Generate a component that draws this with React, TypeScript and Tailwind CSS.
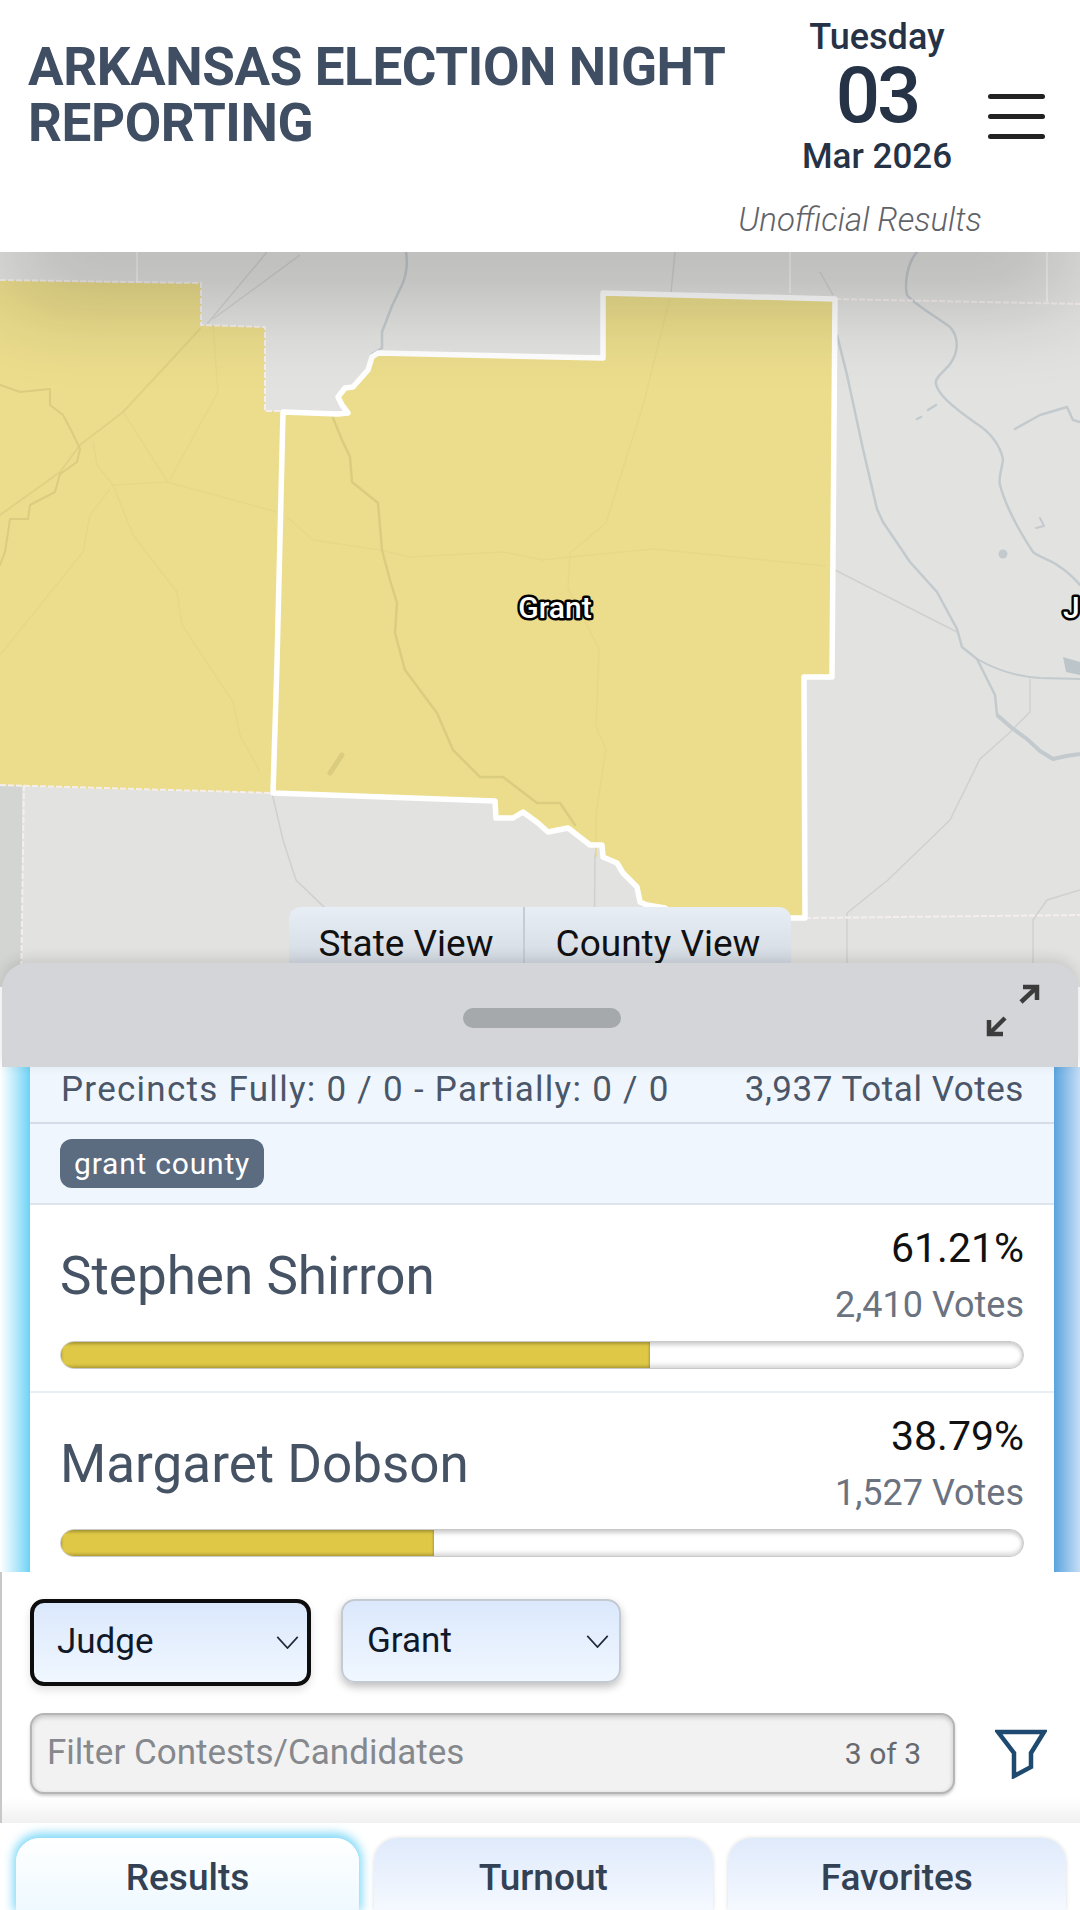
import React from 'react';

const candidates = [
  { name: 'Stephen Shirron', percent: 61.21, votes: '2,410' },
  { name: 'Margaret Dobson', percent: 38.79, votes: '1,527' },
];

const tabs = ['Results', 'Turnout', 'Favorites'];

const grantOutline =
  'M603 293 L835 299 L832 677 L804 677 L805 918 L680 918 L665 908 L647 905 L640 902 L637 887 L623 873 L617 863 L603 857 L602 845 L590 845 L568 828 L548 832 L538 823 L523 812 L513 818 L496 818 L495 801 L273 793 L277 663 L283 412 L338 414 L348 413 L342 405 L338 397 L345 388 L353 387 L368 370 L372 357 L378 353 L603 358 Z';

const CountyMap = () => (
  <svg viewBox="0 252 1080 735" className="block w-full h-full">
    <rect x="0" y="252" width="1080" height="735" fill="#e2e2e0" />
    <rect x="0" y="785" width="22" height="202" fill="#d3d5d3" />

    {/* yellow counties */}
    <path d="M0 280 L137 283 L201 283 L201 325 L265 327 L265 411 L283 411 L273 793 L100 789 L0 785 Z" fill="#ebdd8c" />
    <path d={grantOutline} fill="#ebdd8c" />

    {/* roads outside the yellow */}
    <g fill="none" stroke="#cfd1d1" strokeWidth="1.5">
      <path d="M267 252 L207 324" />
      <path d="M300 255 L213 319" />
      <path d="M675 252 L671 293" />
      <path d="M820 272 L833 295" />
      <path d="M835 570 L957 632" />
      <path d="M1030 679 L1030 712 L1007 735 L980 759 L950 820 L888 880 L847 913 L847 987" />
      <path d="M1080 890 L1047 900 L1033 920 L1033 987" />
      <path d="M272 793 L283 840 L296 880 L324 907 L340 987" />
      <path d="M595 853 L594 987" />
    </g>

    {/* roads inside the yellow */}
    <g fill="none" stroke="#e6d888" strokeWidth="1.5" strokeLinejoin="round">
      <path d="M123 412 L168 482" />
      <path d="M213 325 L218 392 L170 479" />
      <path d="M113 485 L167 482 L277 512" />
      <path d="M113 485 L133 535 L177 592 L182 625 L233 702 L240 735 L260 772" />
      <path d="M110 489 L90 515 L83 552 L0 655" />
      <path d="M93 442 L97 465 L113 485" />
      <path d="M287 517 L313 540 L380 550 L410 557 L503 552 L543 560 L570 557 L654 549 L826 566" />
      <path d="M671 293 L644 402 L606 523 L570 553 L568 588 L599 649 L596 727 L606 749 L596 814 L596 857" />
    </g>

    {/* rivers */}
    <g fill="none" stroke="#c3cace" strokeWidth="2.5" strokeLinejoin="round" strokeLinecap="round">
      <path d="M406 252 C408 265 406 276 402 285 L392 306 L382 332 L382 348 L372 354" />
      <path d="M917 252 C908 262 904 282 907 295 C915 305 938 318 950 327 C958 336 960 350 950 364 C944 372 934 378 936 384 C938 394 950 405 977 424 C990 432 1000 445 1003 459 C1002 470 998 478 1000 485 C1004 500 1012 520 1033 552 C1040 558 1052 560 1060 567 C1068 572 1074 578 1080 585" />
      <path d="M837 335 L847 375 L863 449 L877 509 L883 522 L910 562 L937 592 L957 629 L962 647 L977 659 L995 695 L997 715" />
      <path d="M1015 429 L1040 415 L1067 407 L1073 420 L1080 422" />
      <path d="M977 659 C1000 672 1020 677 1040 678 L1080 679" strokeWidth="2" />
      <path d="M1040 518 L1044 526 L1036 528" strokeWidth="2" />
      <path d="M917 419 L921 417 M928 410 L936 405" strokeWidth="2.5" />
    </g>
    <path d="M997 715 L1012 728 L1027 739 L1040 751 L1053 759 L1066 756 L1080 754" fill="none" stroke="#c3cace" strokeWidth="4" strokeLinejoin="round" />
    <path d="M1063 657 L1080 662 L1080 675 L1066 672 Z" fill="#bcc5ca" />
    <circle cx="1003" cy="554" r="4.5" fill="#c3cace" />

    <g fill="none" stroke="#dacd7f" strokeWidth="2" strokeLinejoin="round" strokeLinecap="round">
      <path d="M200 329 L123 412 L80 445 L60 472 L0 515" stroke="#e0d283" />
      <path d="M333 418 L342 440 L350 457 L352 482 L378 503 L382 550 L390 580 L397 603 L395 633 L405 670 L437 713 L453 750 L480 777 L503 777 L537 803 L560 803 L575 825" strokeWidth="2.5" />
      <path d="M0 385 L20 392 L50 389 L50 405 L63 415 L72 432 L80 449 L77 462 L60 474 L55 492 L30 505 L28 519 L10 519 L5 552 L0 565" />
      <path d="M342 755 L330 773" strokeWidth="5" />
    </g>

    {/* county lines */}
    <g fill="none" stroke="#f4eeee" strokeWidth="2" strokeDasharray="6 2">
      <path d="M835 299 L1080 304" />
      <path d="M805 918 L1080 915" />
      <path d="M24 785 L21 987" />
      <path d="M0 785 L273 793" />
      <path d="M0 280 L201 283 L201 325 L265 327 L265 411 L283 411" />
    </g>
    <g fill="none" stroke="#f4f4f2" strokeWidth="1.5">
      <path d="M137 252 L137 283" />
      <path d="M790 252 L790 293" />
      <path d="M1047 252 L1047 302" />
    </g>

    <path d={grantOutline} fill="none" stroke="#ffffff" strokeWidth="5.5" strokeLinejoin="round" />

    <text x="555" y="618" textAnchor="middle" fontFamily="Roboto, sans-serif" fontSize="30" fontWeight="500" fill="#ffffff" stroke="#000000" strokeWidth="5" strokeLinejoin="round" paintOrder="stroke">Grant</text>
    <text x="1063" y="618" fontFamily="Roboto, sans-serif" fontSize="30" fontWeight="500" fill="#ffffff" stroke="#000000" strokeWidth="5" strokeLinejoin="round" paintOrder="stroke">J</text>
  </svg>
);

const Chevron = () => (
  <svg viewBox="0 0 24 14" className="w-[23px] h-[13px]" fill="none" stroke="#1f2937" strokeWidth="1.8">
    <path d="M1 1 L12 13 L23 1" />
  </svg>
);

export default function App() {
  return (
    <div className="flex flex-col w-full h-[1910px] overflow-hidden bg-white font-['Roboto',sans-serif]">
      {/* header */}
      <header className="flex h-[252px] shrink-0 bg-white">
        <h1 className="w-[767px] pl-[28px] pt-[39px] text-[53px] leading-[56px] font-bold text-[#3f4e63] tracking-[-0.4px]">
          ARKANSAS ELECTION NIGHT REPORTING
        </h1>
        <div className="flex flex-col items-center w-[220px] pt-[16px]">
          <div className="text-[36px] leading-[42px] font-medium text-[#263246]">Tuesday</div>
          <div className="text-[78px] leading-[76px] font-medium text-[#263246] tracking-[-3px]">03</div>
          <div className="text-[35px] leading-[46px] font-medium text-[#263246]">Mar 2026</div>
          <div className="mt-[20px] -ml-[34px] text-[33px] leading-[40px] italic font-light text-[#5f6368] whitespace-nowrap">Unofficial Results</div>
        </div>
        <div className="flex flex-col gap-[15px] w-[57px] ml-[1px] mt-[94px]">
          <div className="h-[5px] rounded-full bg-[#222222]"></div>
          <div className="h-[5px] rounded-full bg-[#222222]"></div>
          <div className="h-[5px] rounded-full bg-[#222222]"></div>
        </div>
      </header>

      {/* map */}
      <div className="relative h-[735px] shrink-0 overflow-hidden">
        <CountyMap />
        <div className="absolute top-0 left-[30px] right-[30px] h-0 shadow-[0_0_100px_30px_rgba(0,0,0,0.33)]"></div>
        <div className="absolute left-[289px] bottom-[24px] flex h-[56px] w-[502px] rounded-t-[12px] bg-gradient-to-b from-[#e8eef6] to-[#d5dbe3] text-[37px] text-[#111111]">
          <div className="flex items-start justify-center w-[236px] pt-[19px] leading-[36px] border-r-2 border-[#c6ccd4]">State View</div>
          <div className="flex items-start justify-center flex-1 pt-[19px] leading-[36px]">County View</div>
        </div>
      </div>

      {/* results sheet */}
      <div className="relative -mt-[24px] flex flex-col h-[609px] shrink-0 rounded-t-[26px]">
        <div className="relative flex items-center justify-center h-[104px] shrink-0 mx-[2px] rounded-t-[26px] bg-[#d3d5d9] shadow-[0_-4px_14px_rgba(0,0,0,0.12)]">
          <div className="w-[158px] h-[20px] mt-[6px] ml-[4px] rounded-full bg-[#a6a9ab]"></div>
          <svg viewBox="0 0 65 65" className="absolute right-[33px] top-[17px] w-[65px] h-[65px]" fill="none" stroke="#3c3c3c" strokeWidth="4.5">
            <path d="M43 7 L57 7 L57 20" />
            <path d="M56 8 L41 22" />
            <path d="M9 40 L9 54 L23 54" />
            <path d="M10 53 L25 38" />
          </svg>
        </div>

        <div className="flex h-[505px] overflow-hidden bg-white">
          <div className="w-[30px] shrink-0 bg-gradient-to-r from-white to-[#6ad3f6]"></div>
          <div className="flex-1 flex flex-col min-w-0">
            <div className="flex items-center justify-between h-[57px] shrink-0 pb-[8px] pl-[31px] pr-[30px] bg-[#eff6fe] border-b-2 border-[#d5dee8] text-[35px] text-[#4b5768]">
              <span className="tracking-[1.27px]">Precincts Fully: 0 / 0 - Partially: 0 / 0</span>
              <span className="tracking-[0.55px]">3,937 Total Votes</span>
            </div>
            <div className="flex items-center h-[81px] shrink-0 pl-[30px] bg-[#eff6fe] border-b-2 border-[#dde4ec]">
              <span className="flex items-center h-[49px] px-[14px] rounded-[12px] bg-[#5b6b80] text-[30px] tracking-[0.8px] text-white">grant county</span>
            </div>
            {candidates.map((candidate, i) => (
              <div key={candidate.name} className={`flex flex-col h-[188px] shrink-0 pl-[30px] pr-[30px] ${i === 0 ? 'border-b-2 border-[#e9eef4]' : ''}`}>
                <div className="flex items-center justify-between h-[136px] pt-[8px]">
                  <span className="text-[53px] text-[#465364]">{candidate.name}</span>
                  <div className="flex flex-col items-end">
                    <span className="text-[41px] leading-[57px] text-[#111111]">{candidate.percent}%</span>
                    <span className="text-[36px] leading-[57px] text-[#6b7280]">{candidate.votes} Votes</span>
                  </div>
                </div>
                <div className="h-[28px] shrink-0 rounded-full overflow-hidden bg-white border border-[#c9c9c9] shadow-[inset_0_3px_4px_rgba(0,0,0,0.2),inset_0_-3px_4px_rgba(0,0,0,0.15)]">
                  <div className="h-full bg-[#dec846] shadow-[inset_0_2px_3px_rgba(0,0,0,0.25),inset_0_-2px_3px_rgba(0,0,0,0.2)]" style={{ width: `${candidate.percent}%` }}></div>
                </div>
              </div>
            ))}
          </div>
          <div className="w-[26px] shrink-0 bg-gradient-to-r from-[#59a4de] to-[#c4def4]"></div>
        </div>
      </div>

      {/* filters */}
      <div className="flex flex-col gap-[27px] h-[251px] shrink-0 pt-[27px] pl-[28px] bg-gradient-to-b from-white from-[90%] to-[#f1f1f1] border-l-2 border-[#c8c8c8]">
        <div className="flex gap-[30px]">
          <div className="flex items-center justify-between w-[281px] h-[87px] pl-[23px] pr-[8px] rounded-[14px] border-4 border-[#0d0d0d] bg-gradient-to-b from-[#dbe8fc] to-[#f0f7ff] text-[35px] text-[#111827] shadow-[0_4px_8px_rgba(0,0,0,0.12)]">
            <span>Judge</span>
            <Chevron />
          </div>
          <div className="flex items-center justify-between w-[280px] h-[84px] pl-[24px] pr-[10px] rounded-[14px] border-2 border-[#c4cad2] bg-gradient-to-b from-[#dbe8fc] to-[#f0f7ff] text-[35px] text-[#111827] shadow-[0_4px_8px_rgba(0,0,0,0.25)]">
            <span>Grant</span>
            <Chevron />
          </div>
        </div>
        <div className="flex items-center gap-[40px]">
          <div className="flex items-center justify-between w-[925px] h-[81px] pl-[15px] pr-[32px] rounded-[14px] bg-[#f2f2f2] border-2 border-[#b5b5b5] shadow-[inset_0_2px_5px_rgba(0,0,0,0.2),0_2px_3px_rgba(0,0,0,0.2)]">
            <span className="text-[35px] text-[#85888c]">Filter Contests/Candidates</span>
            <span className="text-[30px] text-[#666a70]">3 of 3</span>
          </div>
          <svg viewBox="0 0 52 50" className="w-[52px] h-[50px]" fill="none" stroke="#1f4a70" strokeWidth="4.5">
            <path d="M3 3 L49 3 L36 24 L36 38 L19 47 L19 24 Z" />
          </svg>
        </div>
      </div>

      {/* bottom tabs */}
      <nav className="flex gap-[15px] flex-1 pt-[15px] pl-[16px] pr-[14px] bg-white">
        {tabs.map((tab, i) => (
          <div
            key={tab}
            className={`flex items-start justify-center pt-[18px] rounded-t-[24px] text-[37px] leading-[44px] font-medium text-[#334155] ${i === 0 ? 'w-[343px] shrink-0 bg-gradient-to-b from-white to-[#eef9ff] shadow-[0_-2px_10px_3px_rgba(90,205,245,0.75)]' : 'flex-1 bg-gradient-to-b from-[#dfeafb] to-[#f5f9ff] shadow-[0_0_4px_rgba(0,0,0,0.15)]'}`}
          >
            {tab}
          </div>
        ))}
      </nav>
    </div>
  );
}
